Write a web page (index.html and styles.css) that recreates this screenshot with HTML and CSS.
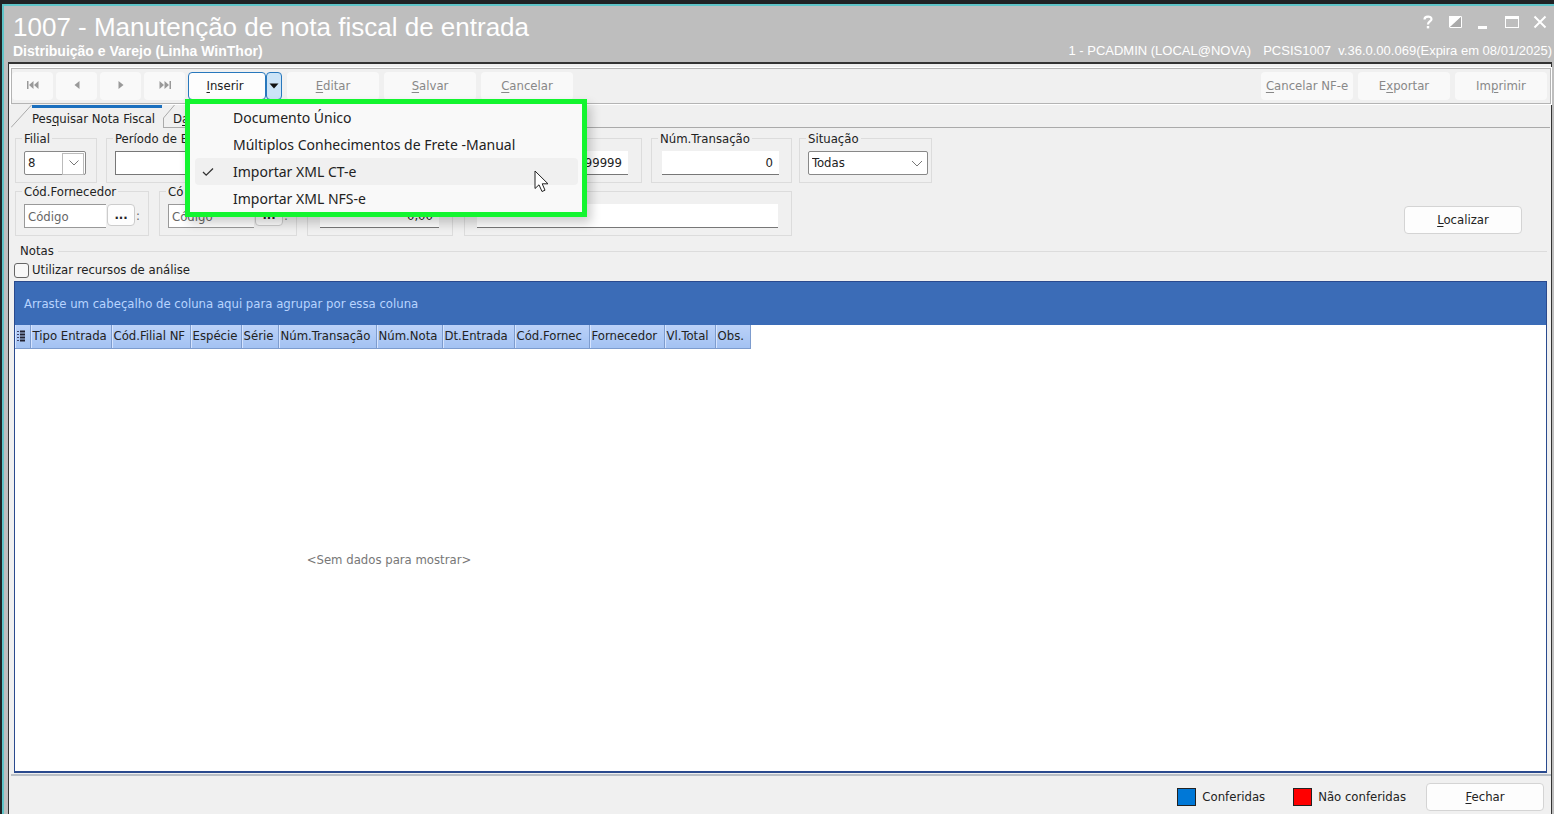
FILE: index.html
```
<!DOCTYPE html>
<html lang="pt-BR">
<head>
    <meta charset="utf-8">
    <title>1007 - Manutenção de nota fiscal de entrada</title>
    <link rel="stylesheet" href="styles.css">
</head>

<body>
    <div class="window">
        <header class="titlebar">
            <div class="title-row">
                <h1>1007 - Manutenção de nota fiscal de entrada</h1>
                <div class="window-buttons">
                    <button class="win-btn" aria-label="Ajuda">
                        <svg width="14" height="14" viewBox="0 0 14 14"><path d="M3.5 4.5C3.5 0.6 10.5 0.6 10.5 4.2C10.5 6.4 7 6.6 7 9.4" stroke="#fff" stroke-width="2.2" fill="none"/><rect x="5.8" y="11" width="2.4" height="2.4" fill="#fff"/></svg>
                    </button>
                    <button class="win-btn" aria-label="Tema">
                        <svg width="14" height="14" viewBox="0 0 14 14"><rect x="0.5" y="1.5" width="12" height="11" fill="none" stroke="#fff"/><path d="M0 13V1H13Z" fill="#fff"/><path d="M13 1V13H0Z" fill="#aaa"/><path d="M12.5 1.5V12.5H1" fill="none" stroke="#fff"/></svg>
                    </button>
                    <button class="win-btn" aria-label="Minimizar">
                        <svg width="14" height="14" viewBox="0 0 14 14"><rect x="1" y="11" width="9" height="3" fill="#fff"/></svg>
                    </button>
                    <button class="win-btn" aria-label="Maximizar">
                        <svg width="14" height="14" viewBox="0 0 14 14"><rect x="0.5" y="1.5" width="13" height="11" fill="none" stroke="#fff"/><rect x="0" y="1" width="14" height="3" fill="#fff"/></svg>
                    </button>
                    <button class="win-btn" aria-label="Fechar janela">
                        <svg width="14" height="14" viewBox="0 0 14 14"><path d="M1.5 1.5L12.5 12.5M12.5 1.5L1.5 12.5" stroke="#fff" stroke-width="2"/></svg>
                    </button>
                </div>
            </div>
            <div class="subtitle-row">
                <strong>Distribuição e Varejo (Linha WinThor)</strong>
                <div class="session">
                    <span>1 - PCADMIN (LOCAL@NOVA)</span>
                    <span>PCSIS1007&nbsp; v.36.0.00.069(Expira em 08/01/2025)</span>
                </div>
            </div>
        </header>

        <main>
            <div class="toolbar">
                <button class="nav-btn" disabled aria-label="Primeiro"><svg width="12" height="10" viewBox="0 0 12 10"><path d="M0 1H1.5V9H0ZM6.5 1V9L2 5ZM11.5 1V9L7 5Z"/></svg></button>
                <button class="nav-btn" disabled aria-label="Anterior"><svg width="12" height="10" viewBox="0 0 12 10"><path d="M8.5 1V9L3.5 5Z"/></svg></button>
                <button class="nav-btn" disabled aria-label="Próximo"><svg width="12" height="10" viewBox="0 0 12 10"><path d="M3.5 1V9L8.5 5Z"/></svg></button>
                <button class="nav-btn" disabled aria-label="Último"><svg width="12" height="10" viewBox="0 0 12 10"><path d="M0.5 1V9L5 5ZM5.5 1V9L10 5ZM10.5 1H12V9H10.5Z"/></svg></button>
                <div class="split">
                    <button class="insert-btn"><u>I</u>nserir</button>
                    <button class="insert-arrow" aria-label="Opções de inserção"><svg width="10" height="6" viewBox="0 0 10 6"><path d="M0.5 0.5H9.5L5 5.5Z" fill="#111"/></svg></button>
                    <div class="menu" role="menu">
                        <button role="menuitem">Documento Único</button>
                        <button role="menuitem">Múltiplos Conhecimentos de Frete -Manual</button>
                        <button role="menuitem" class="active">
                            <svg class="check" width="12" height="10" viewBox="0 0 12 10"><path d="M1 5L4.2 8.2L11 1.5" fill="none" stroke="#333" stroke-width="1.3"/></svg>
                            Importar XML CT-e
                        </button>
                        <button role="menuitem">Importar XML NFS-e</button>
                        <svg class="cursor" width="16" height="23" viewBox="0 0 16 23"><path d="M1 1V18.5L5 14.8L8 21.5L11 20.2L8.2 13.8H14Z" fill="#fff" stroke="#222"/></svg>
                    </div>
                </div>
                <button class="tool-btn" disabled><u>E</u>ditar</button>
                <button class="tool-btn" disabled><u>S</u>alvar</button>
                <button class="tool-btn" disabled><u>C</u>ancelar</button>
                <div class="spacer"></div>
                <button class="tool-btn" disabled><u>C</u>ancelar NF-e</button>
                <button class="tool-btn" disabled>E<u>x</u>portar</button>
                <button class="tool-btn" disabled>Im<u>p</u>rimir</button>
            </div>

            <nav class="tabs">
                <button class="tab selected">
                    <svg class="slope" width="21" height="24" viewBox="0 0 21 24"><path d="M0 23.5L20.5 1" fill="none" stroke="#aaa"/></svg>
                    <span>Pes<u>q</u>uisar Nota Fiscal</span>
                </button>
                <button class="tab">
                    <svg class="slope" width="12" height="24" viewBox="0 0 12 24"><path d="M0.5 24V14L11.5 1" fill="none" stroke="#aaa"/></svg>
                    <span>D<u>a</u></span>
                </button>
            </nav>

            <section class="search">
                <div class="filters">
                    <div class="filter-row">
                        <div class="group filial">
                            <label for="filial">Filial</label>
                            <div class="select boxed">
                                <select id="filial"><option>8</option></select>
                                <svg width="10" height="6" viewBox="0 0 10 6"><path d="M0.5 0.5L5 5L9.5 0.5" fill="none" stroke="#777"/></svg>
                            </div>
                        </div>
                        <div class="group periodo">
                            <label for="periodo">Período de E</label>
                            <input id="periodo" type="text">
                        </div>
                        <div class="group nota">
                            <input type="text" class="number" value="99999" aria-label="Número da nota">
                        </div>
                        <div class="group transacao">
                            <label for="transacao">Núm.Transação</label>
                            <input id="transacao" type="text" class="number" value="0">
                        </div>
                        <div class="group situacao">
                            <label for="situacao">Situação</label>
                            <div class="select">
                                <select id="situacao"><option>Todas</option></select>
                                <svg width="12" height="7" viewBox="0 0 12 7"><path d="M1 1L6 6L11 1" fill="none" stroke="#777"/></svg>
                            </div>
                        </div>
                    </div>
                    <div class="filter-row">
                        <div class="group fornecedor">
                            <label for="fornecedor">Cód.Fornecedor</label>
                            <div class="lookup">
                                <input id="fornecedor" type="text" placeholder="Código">
                                <button aria-label="Buscar fornecedor">...</button>
                                <span>:</span>
                            </div>
                        </div>
                        <div class="group codigo">
                            <label for="codigo">Có</label>
                            <div class="lookup">
                                <input id="codigo" type="text" placeholder="Código">
                                <button aria-label="Buscar código">...</button>
                                <span>:</span>
                            </div>
                        </div>
                        <div class="group valor">
                            <input type="text" class="number" value="0,00" aria-label="Valor">
                        </div>
                        <div class="group chave">
                            <input type="text" aria-label="Chave">
                        </div>
                    </div>
                </div>
                <button class="push"><u>L</u>ocalizar</button>
            </section>

            <section class="notes">
                <h2>Notas</h2>
                <label class="analysis"><input type="checkbox">Utilizar recursos de análise</label>
                <div class="grid">
                    <div class="group-panel">Arraste um cabeçalho de coluna aqui para agrupar por essa coluna</div>
                    <table>
                        <thead>
                            <tr>
                                <th class="c-mark" aria-label="Colunas"><svg width="8" height="12" viewBox="0 0 8 12"><path d="M3 1.5H8M3 4.5H8M3 7.5H8M3 10.5H8" stroke="#223" stroke-width="2"/><path d="M0 1.5H2M0 4.5H2M0 7.5H2M0 10.5H2" stroke="#446"/></svg></th>
                                <th class="c-tipo">Tipo Entrada</th>
                                <th class="c-filial">Cód.Filial NF</th>
                                <th class="c-especie">Espécie</th>
                                <th class="c-serie">Série</th>
                                <th class="c-trans">Núm.Transação</th>
                                <th class="c-nota">Núm.Nota</th>
                                <th class="c-data">Dt.Entrada</th>
                                <th class="c-cod">Cód.Fornec</th>
                                <th class="c-forn">Fornecedor</th>
                                <th class="c-total">Vl.Total</th>
                                <th class="c-obs">Obs.</th>
                            </tr>
                        </thead>
                    </table>
                    <div class="empty">&lt;Sem dados para mostrar&gt;</div>
                </div>
            </section>

            <footer>
                <div class="legend"><i class="blue"></i>Conferidas</div>
                <div class="legend"><i class="red"></i>Não conferidas</div>
                <button class="push"><u>F</u>echar</button>
            </footer>
        </main>
    </div>
</body>
</html>
```
FILE: styles.css
```
* {
    box-sizing: border-box;
}
body {
    margin: 0;
    padding: 4px 0 0 2px;
    min-height: 100vh;
    display: flex;
    background: #202224;
    color: #222;
    font: 13px/16px "DejaVu Sans Condensed", "DejaVu Sans", sans-serif;
}
button, input, select {
    font: inherit;
    color: inherit;
}
button {
    padding: 0;
    border: 0;
    background: none;
}
u {
    text-underline-offset: 2px;
}

.window {
    flex: 1;
    display: flex;
    flex-direction: column;
    border-top: 2px solid #5fc4c8;
    border-left: 2px solid #5fc4c8;
    background: #bebebe;
}
.titlebar {
    padding: 4px 2px 0 9px;
    height: 56px;
    color: #fff;
    font-family: "Liberation Sans", sans-serif;
}
.title-row, .subtitle-row {
    display: flex;
    justify-content: space-between;
}
h1 {
    margin: 0;
    font-size: 26px;
    line-height: 34px;
    font-weight: normal;
}
.window-buttons {
    display: flex;
    gap: 14px;
    padding: 5px 5px 0 0;
    height: 24px;
}
.win-btn {
    width: 14px;
    height: 14px;
}
.win-btn svg {
    display: block;
}
.subtitle-row {
    font-size: 13px;
    line-height: 14px;
}
.subtitle-row strong {
    font-size: 14px;
}
.session {
    display: flex;
    gap: 12px;
}

main {
    flex: 1;
    display: flex;
    flex-direction: column;
    margin: 0 2px 0 4px;
    padding: 4px 0 0 2px;
    border: solid #333;
    border-width: 2px 1px 0;
    background: #f0f0f0;
}
.toolbar {
    display: flex;
    align-items: center;
    height: 36px;
    padding: 0 3px 0 0;
    border: 1px solid #b4b4b4;
    box-shadow: 0 0 0 1px #fff;
}
.toolbar button {
    height: 28px;
    border-radius: 4px;
}
.toolbar .nav-btn, .toolbar .tool-btn {
    background: #f9f9f9;
    color: #888;
}
.nav-btn {
    width: 41px;
    margin-right: 3px;
}
.nav-btn svg {
    fill: #999;
}
.tool-btn {
    width: 92px;
    margin-left: 5px;
}
.spacer {
    flex: 1;
}
.split {
    position: relative;
    display: flex;
}
.toolbar .insert-btn {
    width: 78px;
    border: 1px solid #2878bd;
    background: #fdfdfd;
    padding-right: 4px;
}
.toolbar .insert-arrow {
    width: 16px;
    border: 1px solid #2878bd;
    background: #cce4f7;
}
.insert-arrow svg {
    display: block;
    margin: auto;
}

.menu {
    position: absolute;
    z-index: 1;
    top: 27px;
    left: -3px;
    width: 402px;
    padding: 0 4px 0 5px;
    border: 5px solid #13f52f;
    background: #f9f9f9;
    box-shadow: 4px 6px 10px rgba(0, 0, 0, 0.2);
}
.toolbar .menu button {
    position: relative;
    display: block;
    width: 100%;
    height: 27px;
    padding-left: 38px;
    border-radius: 4px;
    text-align: left;
    font: 14px/20px "Noto Sans", sans-serif;
}
.toolbar .menu .active {
    background: #f0f0f0;
}
.check {
    position: absolute;
    left: 7px;
    top: 9px;
}
.cursor {
    position: absolute;
    left: 344px;
    top: 66px;
}

.tabs {
    display: flex;
    height: 24px;
    margin-right: 1px;
    border-bottom: 1px solid #aaa;
}
.tab {
    position: relative;
    height: 23px;
    padding: 6px 6px 0 10px;
}
.tab .slope {
    position: absolute;
    left: 0;
    top: 0;
}
.tab.selected {
    width: 152px;
    height: 24px;
    background: linear-gradient(#1a6fbe, #1a6fbe) 21px 1px / 130px 3px no-repeat, #f0f0f0;
    padding: 6px 0 0 21px;
    text-align: left;
    white-space: nowrap;
}

.search {
    display: flex;
    justify-content: space-between;
    align-items: flex-end;
    padding: 10px 29px 0 4px;
}
.filters {
    display: flex;
    flex-direction: column;
    gap: 8px;
}
.filter-row {
    display: flex;
}
.group {
    position: relative;
    height: 45px;
    padding: 12px 8px 0;
    border: 1px solid #dcdcdc;
}
.group > label {
    position: absolute;
    top: -8px;
    left: 6px;
    padding: 0 2px;
    background: #f0f0f0;
    white-space: nowrap;
}
.group input, .group select {
    display: block;
    width: 100%;
    height: 24px;
    padding: 0 6px;
    border: 0;
    border-bottom: 1px solid #777;
    border-radius: 0;
    background: #fff;
}
.group .number {
    text-align: right;
}
.group input::placeholder {
    color: #666;
}
.filial {
    width: 82px;
    margin-right: 9px;
}
.periodo {
    width: 270px;
    margin-right: 9px;
}
.group.periodo input {
    border: 1px solid #777;
}
.nota {
    width: 257px;
    padding-right: 13px;
    margin-right: 9px;
}
.transacao {
    width: 141px;
    padding: 12px 12px 0 10px;
    margin-right: 7px;
}
.situacao {
    width: 133px;
    padding-right: 3px;
}
.select {
    position: relative;
}
.group .select select {
    appearance: none;
    padding: 0 3px;
    border: 1px solid #888;
    border-radius: 2px;
}
.select svg {
    position: absolute;
    right: 5px;
    top: 9px;
    pointer-events: none;
}
.boxed {
    width: 62px;
}
.boxed::after {
    content: "";
    position: absolute;
    top: 2px;
    right: 2px;
    width: 20px;
    height: 20px;
    border: 1px solid #bbb;
    pointer-events: none;
}
.boxed svg {
    right: 7px;
}
.lookup {
    display: flex;
    gap: 1px;
}
.lookup span {
    line-height: 24px;
    color: #666;
}
.group .lookup input {
    flex: 1;
    min-width: 0;
    padding: 0 3px;
    border: 1px solid #999;
    border-right: 0;
}
.lookup button {
    width: 28px;
    height: 22px;
    border: 1px solid #ccc;
    border-radius: 4px;
    background: #fdfdfd;
    font-weight: bold;
    line-height: 12px;
}
.fornecedor {
    width: 134px;
    margin-right: 10px;
}
.codigo {
    width: 138px;
    margin-right: 10px;
}
.valor {
    width: 146px;
    margin-right: 11px;
    padding: 12px 13px 0 12px;
}
.chave {
    width: 328px;
    padding: 12px 13px 0 12px;
}
.push {
    width: 118px;
    height: 28px;
    border: 1px solid #d4d4d4;
    border-radius: 4px;
    background: #fdfdfd;
}

.search .push {
    margin-bottom: 2px;
}

.notes {
    flex: 1;
    display: flex;
    flex-direction: column;
    margin-top: 7px;
    padding: 0 4px 1px 3px;
    border-bottom: 2px solid #b9bfc6;
}
.notes h2 {
    display: flex;
    align-items: center;
    gap: 4px;
    margin: 0 0 0 6px;
    font-size: 13px;
    line-height: 16px;
    font-weight: normal;
}
.notes h2::after {
    content: "";
    flex: 1;
    border-top: 1px solid #dcdcdc;
}
.analysis {
    display: flex;
    align-items: center;
    gap: 3px;
    height: 22px;
}
.analysis input {
    appearance: none;
    width: 15px;
    height: 15px;
    margin: 0;
    border: 1px solid #666;
    border-radius: 3px;
    background: #f8f8f8;
}
.grid {
    flex: 1;
    display: flex;
    flex-direction: column;
    border: 1px solid #2a4a8e;
    border-bottom-width: 2px;
    background: #fff;
}
.group-panel {
    height: 43px;
    padding: 0 9px;
    background: #3b6cb7;
    color: #b8d4ff;
    line-height: 44px;
}
table {
    width: 735px;
    table-layout: fixed;
    border-collapse: collapse;
}
th {
    height: 23px;
    padding: 0 0 0 2px;
    border-right: 1px solid #7d9cce;
    border-bottom: 1px solid #7d9cce;
    background: linear-gradient(#bad1f8, #a3c2f2);
    box-shadow: inset 1px 0 #d5e4ff;
    font-weight: normal;
    text-align: left;
    white-space: nowrap;
}
.c-mark { width: 15px; }
.c-mark svg { display: block; }
.c-tipo { width: 81px; }
.c-filial { width: 79px; }
.c-especie { width: 51px; }
.c-serie { width: 37px; }
.c-trans { width: 98px; }
.c-nota { width: 66px; }
.c-data { width: 72px; }
.c-cod { width: 75px; }
.c-forn { width: 75px; }
.c-total { width: 51px; }
.c-obs { width: 35px; }
.empty {
    flex: 1;
    display: flex;
    align-items: center;
    justify-content: center;
    width: 748px;
    color: #777;
}

footer {
    display: flex;
    justify-content: flex-end;
    align-items: center;
    gap: 28px;
    height: 38px;
    padding: 4px 7px 0 0;
}
.legend {
    display: flex;
    align-items: center;
    gap: 6px;
}
.legend i {
    width: 19px;
    height: 18px;
    border: 1px solid #222;
}
.blue {
    background: #0078d7;
}
.red {
    background: #f00;
}
footer .push {
    margin-left: -8px;
}
```
